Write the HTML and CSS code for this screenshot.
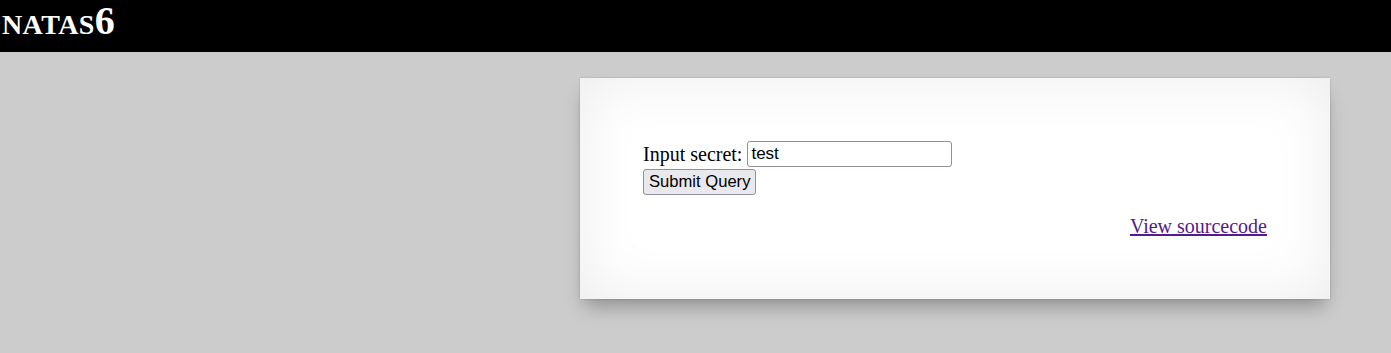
FILE: index.html
```html
<!DOCTYPE html>
<html>
<head>
<meta charset="utf-8">
<title>natas6</title>
<link rel="stylesheet" href="styles.css">
</head>
<body>
<h1 class="title">natas6</h1>
<div class="content">
  <form class="secret-form" method="post">
    Input secret: <input class="secret-input" name="secret" value="test"><br>
    <input class="submit-btn" type="submit" name="submit" value="Submit Query">
  </form>
  <div class="viewsource"><a class="source-link" href="#">View sourcecode</a></div>
</div>
</body>
</html>
```

FILE: styles.css
```css
html, body {
  margin: 0;
  padding: 0;
}
html {
  background: #cccccc;
}
body {
  min-height: 353px;
  background: #cccccc;
  font-family: "Liberation Serif", "Times New Roman", serif;
  font-size: 20px;
  color: #000;
}
.title {
  margin: 0;
  height: 52px;
  box-sizing: border-box;
  padding: 0 0 0 2px;
  background: #000;
  color: #fff;
  font-size: 40px;
  font-weight: bold;
  font-variant: small-caps;
  font-family: "Liberation Serif", "Times New Roman", serif;
  line-height: 42px;
  letter-spacing: 0.4px;
}
.content {
  box-sizing: border-box;
  width: 750px;
  margin: 26px 61px 0 auto;
  padding: 63px 63px 62px;
  background: #fff;
  box-shadow: 0 12px 18px -5px rgba(0, 0, 0, 0.3), 0 0 2px rgba(0, 0, 0, 0.2), inset 0 0 60px rgba(0, 0, 0, 0.08);
}
.secret-form {
  margin: 0 0 20px 0;
  line-height: 27px;
}
.secret-input {
  font-family: "Liberation Sans", Arial, sans-serif;
  font-size: 17px;
  width: 205px;
  height: 26px;
  box-sizing: border-box;
  padding: 1px 3px;
  border: 1px solid #8f8f9d;
  border-radius: 3px;
  vertical-align: top;
}
.submit-btn {
  font-family: "Liberation Sans", Arial, sans-serif;
  font-size: 16.6px;
  height: 26px;
  margin-top: 1px;
  box-sizing: border-box;
  padding: 1px 5px;
  border: 1px solid #8f8f9d;
  border-radius: 3px;
  background: #e9e9ed;
  color: #000;
  vertical-align: top;
}
.viewsource {
  text-align: right;
  line-height: 22px;
}
.source-link {
  color: #551a8b;
}
```
